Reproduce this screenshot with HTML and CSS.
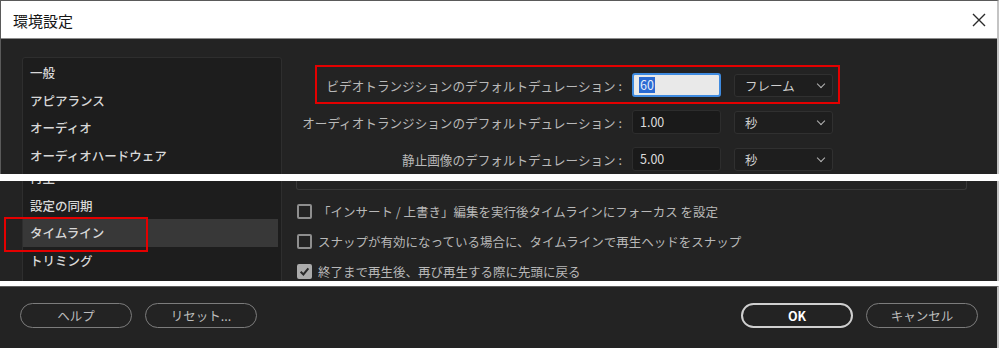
FILE: index.html
```html
<!DOCTYPE html>
<html lang="ja">
<head>
    <meta charset="UTF-8">
    <meta name="viewport" content="width=device-width, initial-scale=1.0">
    <title>環境設定</title>
    <link rel="stylesheet" href="styles.css">
</head>
<body>
    <!-- top crop: title bar + duration fields -->
    <div class="shot shot-top">
        <div class="titlebar">
            <span class="title">環境設定</span>
            <svg class="close" width="14" height="14" viewBox="0 0 14 14">
                <path d="M1 1 L13 13 M13 1 L1 13" stroke="#2b2b2b" stroke-width="1.4" fill="none"/>
            </svg>
        </div>
        <div class="pane">
            <ul class="sidebar sidebar-top">
                <li>一般</li>
                <li>アピアランス</li>
                <li>オーディオ</li>
                <li>オーディオハードウェア</li>
            </ul>
            <div class="fields">
                <div class="field-row">
                    <label class="field-label">ビデオトランジションのデフォルトデュレーション :</label>
                    <div class="num-input focused"><span class="sel">60</span></div>
                    <div class="dropdown"><span>フレーム</span><i class="chev"></i></div>
                </div>
                <div class="field-row">
                    <label class="field-label">オーディオトランジションのデフォルトデュレーション :</label>
                    <div class="num-input">1.00</div>
                    <div class="dropdown"><span>秒</span><i class="chev"></i></div>
                </div>
                <div class="field-row">
                    <label class="field-label">静止画像のデフォルトデュレーション :</label>
                    <div class="num-input">5.00</div>
                    <div class="dropdown"><span>秒</span><i class="chev"></i></div>
                </div>
            </div>
        </div>
        <div class="callout callout-fields"></div>
    </div>

    <!-- middle crop: timeline options -->
    <div class="shot shot-mid">
        <div class="pane">
            <ul class="sidebar sidebar-cont">
                <li>再生</li>
                <li>設定の同期</li>
                <li class="active">タイムライン</li>
                <li>トリミング</li>
            </ul>
            <div class="options">
                <div class="group-end"></div>
                <div class="check-row"><span class="checkbox"></span><span>「インサート / 上書き」編集を実行後タイムラインにフォーカス を設定</span></div>
                <div class="check-row"><span class="checkbox"></span><span>スナップが有効になっている場合に、タイムラインで再生ヘッドをスナップ</span></div>
                <div class="check-row"><span class="checkbox checked">
                    <svg width="11" height="11" viewBox="0 0 12 12"><path d="M1.8 6.2 L4.8 9.2 L10.2 2.6" stroke="#2a2a2a" stroke-width="2.2" fill="none"/></svg>
                </span><span>終了まで再生後、再び再生する際に先頭に戻る</span></div>
            </div>
        </div>
        <div class="callout callout-timeline"></div>
    </div>

    <!-- bottom crop: dialog buttons -->
    <div class="shot shot-bottom">
        <div class="btn-group">
            <button class="pill">ヘルプ</button>
            <button class="pill">リセット...</button>
        </div>
        <div class="btn-group">
            <button class="pill primary">OK</button>
            <button class="pill">キャンセル</button>
        </div>
    </div>
</body>
</html>
```

FILE: styles.css
```css
body {
    margin: 0;
    background-color: #ffffff;
    font-family: "Noto Sans CJK JP", "Noto Sans", sans-serif;
    font-size: 12.5px;
    color: #d2d2d2;
}
ul {
    list-style: none;
    margin: 0;
    padding: 0;
}
.shot {
    position: relative;
    width: 999px;
    box-sizing: border-box;
    background-color: #232323;
    border-right: 2px solid #c4c4c4;
    overflow: hidden;
}
.shot-top {
    height: 174px;
    border-top: 1px solid #5a5a5a;
    border-left: 1px solid #5a5a5a;
}
.shot-mid {
    height: 100px;
    margin-top: 7px;
}
.shot-bottom {
    height: 62px;
    margin-top: 5px;
    border-top: 1px solid #5c5c5c;
    display: flex;
    justify-content: space-between;
    padding: 16px 19px 0 20px;
}

/* title bar */
.titlebar {
    height: 37px;
    background-color: #ffffff;
    border-bottom: 1px solid #8c8c8c;
    display: flex;
    align-items: center;
    justify-content: space-between;
    padding: 0 11px 0 12px;
}
.title {
    font-size: 15px;
    color: #151515;
    line-height: 1;
    padding-top: 2px;
}

/* panes */
.pane {
    display: flex;
    align-items: flex-start;
}
.sidebar {
    width: 260px;
    box-sizing: border-box;
    flex-shrink: 0;
    margin-left: 22px;
    padding: 1px 3px 0 0;
    background-color: #1d1d1d;
    border: 1px solid #2e2e2e;
    border-radius: 3px;
}
.sidebar-top {
    margin-left: 21px;
    margin-top: 18px;
    height: 140px;
}
.sidebar li {
    height: 27.5px;
    line-height: 27.5px;
    padding-left: 7px;
    font-weight: 500;
    color: #d8d8d8;
    white-space: nowrap;
}
.sidebar-cont {
    margin-top: -18px;
    border-top: none;
    border-radius: 0;
    height: 140px;
}
.sidebar li.active {
    background-color: #383838;
}

/* duration fields */
.fields {
    padding: 34px 0 0 14px;
    display: flex;
    flex-direction: column;
    gap: 13px;
}
.field-row {
    display: flex;
    align-items: center;
    height: 24px;
}
.field-label {
    width: 330px;
    text-align: right;
    padding-right: 4px;
    box-sizing: border-box;
    color: #b9b9b9;
    font-size: 12.6px;
    white-space: nowrap;
    padding-top: 1px;
}
.num-input {
    width: 89px;
    height: 24px;
    margin-left: 6px;
    box-sizing: border-box;
    background-color: #1a1a1a;
    border: 1px solid #2d2d2d;
    border-radius: 3px;
    padding-left: 7px;
    line-height: 22px;
    color: #dcdcdc;
}
.num-input.focused {
    background-color: #e9e9e9;
    border: 2px solid #3f8be0;
    padding-left: 5px;
    line-height: 20px;
}
.sel {
    display: inline-block;
    background-color: #2a6ad3;
    color: #e4edf9;
    padding: 0 1px;
    line-height: 16px;
}
.dropdown {
    width: 99px;
    height: 23px;
    margin-left: 13px;
    box-sizing: border-box;
    background-color: #1e1e1e;
    border: 1px solid #303030;
    border-radius: 3px;
    display: flex;
    align-items: center;
    justify-content: space-between;
    padding: 0 8px 0 10px;
    color: #d0d0d0;
}
.chev {
    width: 5px;
    height: 5px;
    border-right: 1.5px solid #b4b4b4;
    border-bottom: 1.5px solid #b4b4b4;
    transform: rotate(45deg);
    margin-top: -3px;
}

/* checkbox options */
.options {
    flex: 1;
    padding-left: 14px;
}
.group-end {
    width: 671px;
    height: 9px;
    box-sizing: border-box;
    border: 1px solid #383838;
    border-top: none;
    border-radius: 0 0 3px 3px;
    margin-bottom: 6px;
}
.check-row {
    height: 30px;
    display: flex;
    align-items: center;
    gap: 6px;
    padding-left: 1px;
    color: #b8b8b8;
    white-space: nowrap;
}
.checkbox {
    flex-shrink: 0;
    width: 15px;
    height: 15px;
    box-sizing: border-box;
    border: 2px solid #8e8e8e;
    border-radius: 2px;
    display: flex;
    align-items: center;
    justify-content: center;
}
.checkbox.checked {
    background-color: #ababab;
    border-color: #ababab;
}

/* red annotation frames */
.callout {
    position: absolute;
    box-sizing: border-box;
    border: 2px solid #e40000;
}
.callout-fields {
    left: 314px;
    top: 64px;
    width: 525px;
    height: 39px;
}
.callout-timeline {
    left: 4px;
    top: 36px;
    width: 144px;
    height: 35px;
}

/* footer buttons */
.btn-group {
    display: flex;
    gap: 13px;
}
.pill {
    width: 112px;
    height: 25px;
    background-color: transparent;
    border: 1.5px solid #7c7c7c;
    border-radius: 13px;
    color: #bdbdbd;
    font-family: "Noto Sans CJK JP", "Noto Sans", sans-serif;
    font-size: 12.5px;
    padding: 0;
}
.pill.primary {
    border: 2px solid #cfcfcf;
    color: #ffffff;
    font-weight: bold;
}
```
